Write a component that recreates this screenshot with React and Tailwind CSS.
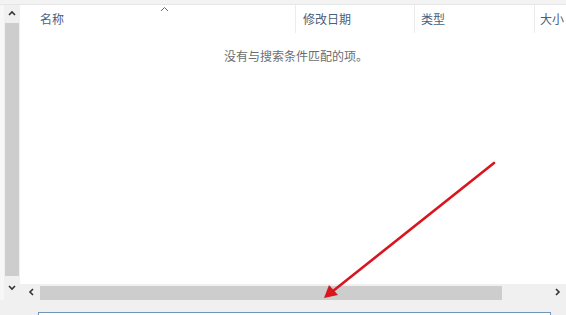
import React from "react";

const font = { fontFamily: '"Noto Sans CJK SC", "Microsoft YaHei", sans-serif' };

function Chevron({ dir }) {
  const paths = {
    up: "M1 5 L4 2 L7 5",
    down: "M1 2 L4 5 L7 2",
    left: "M5 1 L2 4 L5 7",
    right: "M2 1 L5 4 L2 7",
  };
  return (
    <svg width="8" height="8" viewBox="0 0 8 8">
      <path d={paths[dir]} fill="none" stroke="#333" strokeWidth="1.6" />
    </svg>
  );
}

export default function App() {
  return (
    <div
      className="relative w-[566px] h-[315px] bg-[#f0f0f0] flex flex-col overflow-hidden text-[12px]"
      style={font}
    >
      <div className="h-[5px] shrink-0 bg-[#f3f3f3] border-b border-[#e6e6e6]" />
      <div className="flex flex-row h-[295px] shrink-0">
        {/* vertical scrollbar */}
        <div className="w-[20px] shrink-0 flex flex-row">
          <div className="w-[4px] bg-[#f7f7f7]" />
          <div className="w-[16px] flex flex-col bg-[#f0f0f0]">
            <div className="h-[18px] flex items-center justify-center">
              <Chevron dir="up" />
            </div>
            <div className="h-[253px] mx-[1px] bg-[#cdcdcd]" />
            <div className="flex-1 flex items-center justify-center">
              <Chevron dir="down" />
            </div>
          </div>
        </div>
        <div className="flex-1 flex flex-col">
          <div className="h-[279px] bg-white flex flex-col">
            <div className="relative h-[28px] flex flex-row items-center text-[#4c607a]">
              <div className="w-[276px] pl-[20px] h-full flex items-center border-r border-[#ececec]">
                名称
              </div>
              <div className="absolute left-[140px] top-[1px]">
                <svg width="9" height="6" viewBox="0 0 9 6">
                  <path d="M1 5 L4.5 1.5 L8 5" fill="none" stroke="#666" strokeWidth="1" />
                </svg>
              </div>
              <div className="w-[119px] pl-[7px] h-full flex items-center border-r border-[#ececec]">
                修改日期
              </div>
              <div className="w-[120px] pl-[6px] h-full flex items-center border-r border-[#ececec]">
                类型
              </div>
              <div className="flex-1 pl-[5px] h-full flex items-center whitespace-nowrap">
                大小
              </div>
            </div>
            <div className="pt-[14px] flex justify-center text-[#6d6d6d] pl-[6px]">
              没有与搜索条件匹配的项。
            </div>
          </div>
          {/* horizontal scrollbar */}
          <div className="h-[16px] flex flex-row items-center bg-[#f0f0f0]">
            <div className="w-[4px]" />
            <div className="w-[16px] flex items-center justify-center">
              <Chevron dir="left" />
            </div>
            <div className="w-[462px] h-[14px] mt-[1px] bg-[#cdcdcd]" />
            <div className="flex-1" />
            <div className="w-[16px] flex items-center justify-center">
              <Chevron dir="right" />
            </div>
          </div>
        </div>
      </div>
      <div className="flex-1 pl-[38px] pr-[15px] pt-[12px]">
        <div className="h-full bg-white border-t border-x border-[#6f95bd]" />
      </div>
      <svg
        className="absolute left-0 top-0 pointer-events-none"
        width="566"
        height="315"
        viewBox="0 0 566 315"
      >
        <line x1="494" y1="163" x2="333" y2="291" stroke="#d9161d" strokeWidth="2.6" strokeLinecap="round" />
        <polygon points="324,298 329,285 338,295" fill="#d9161d" />
      </svg>
    </div>
  );
}
